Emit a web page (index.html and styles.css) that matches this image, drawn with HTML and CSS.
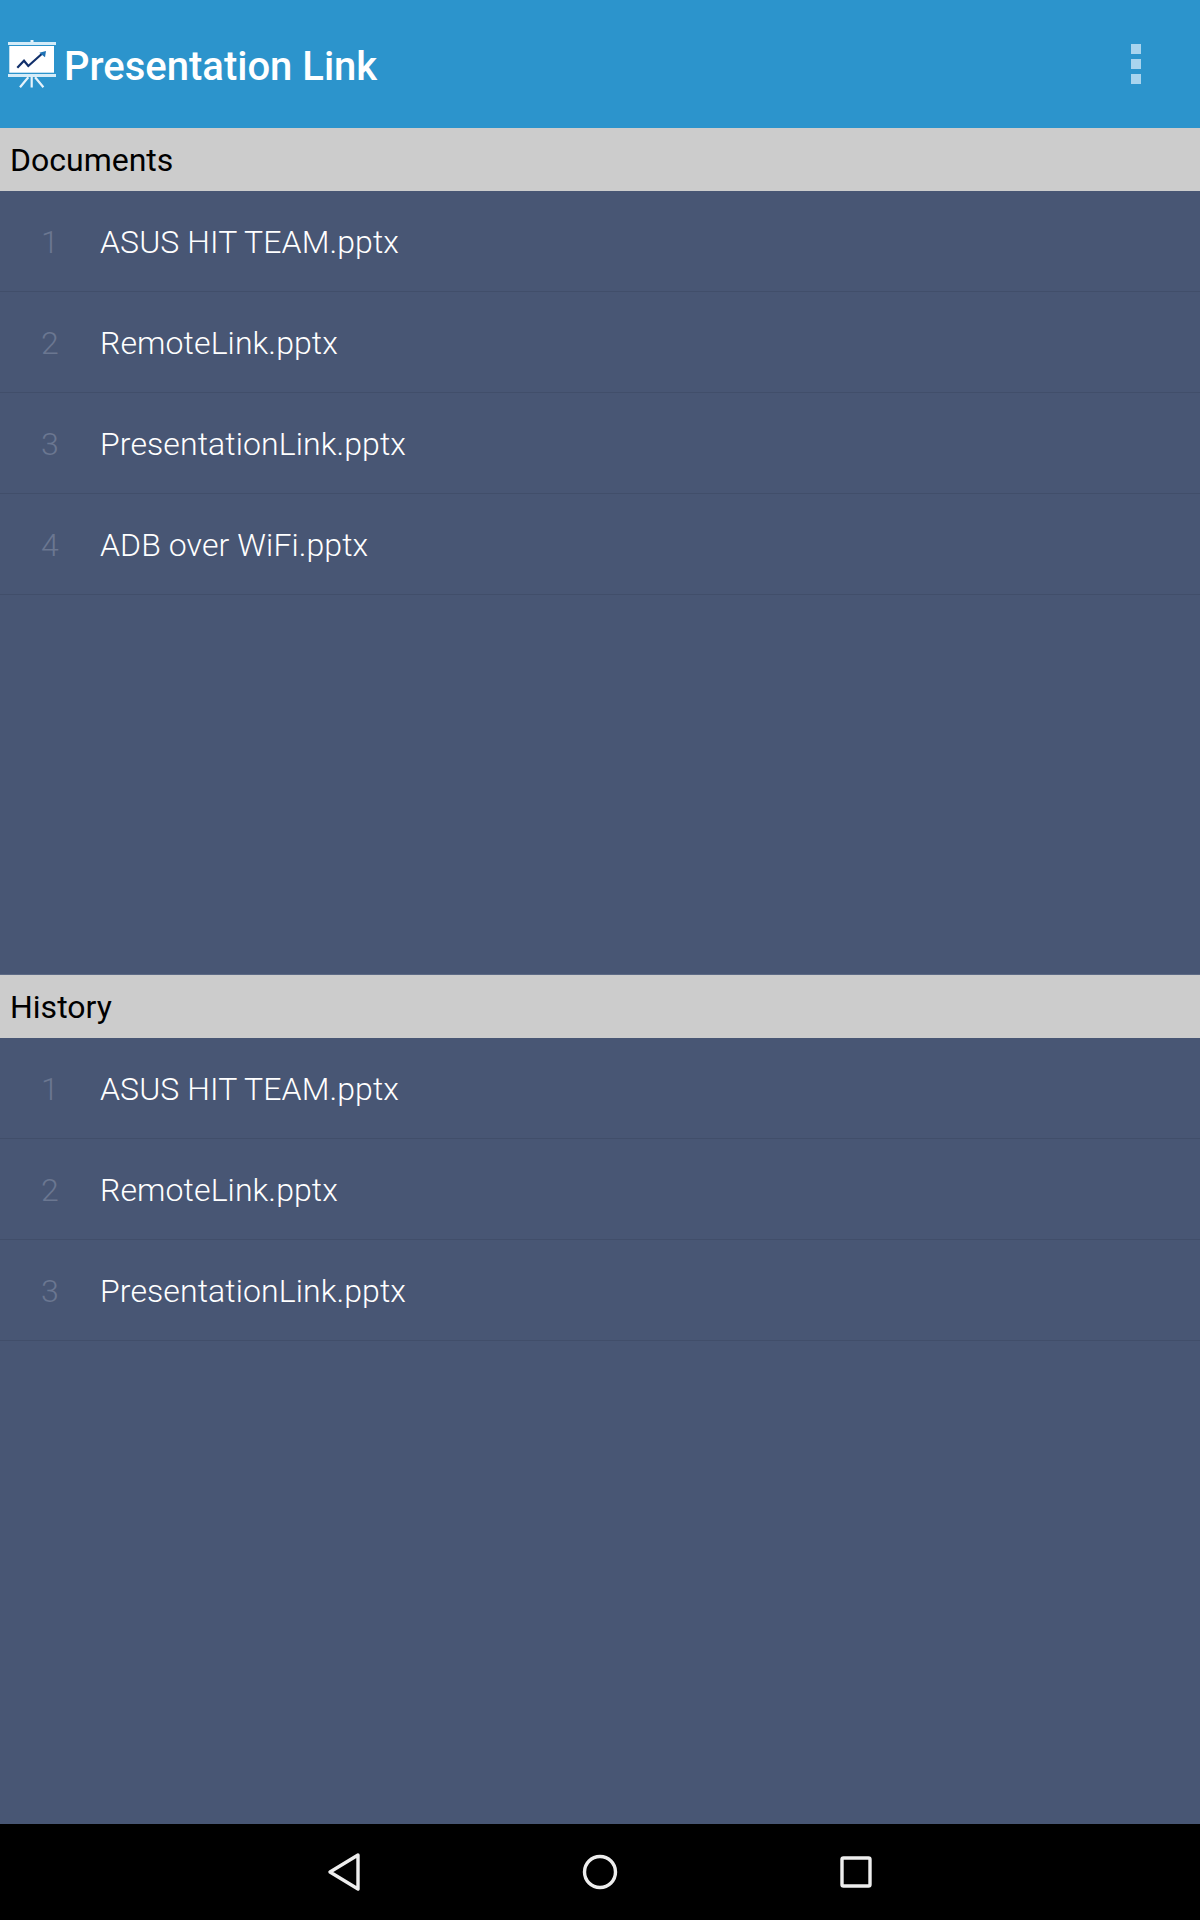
FILE: index.html
```html
<!DOCTYPE html>
<html lang="en">
<head>
<meta charset="utf-8">
<title>Presentation Link</title>
<link rel="stylesheet" href="styles.css">
</head>
<body>
<div class="app">
  <header class="appbar">
    <svg class="logo" width="48" height="48" viewBox="0 0 48 48" aria-hidden="true">
      <rect x="22.500" y="0" width="3" height="2" fill="#e6f3fb"/>
      <rect x="0" y="2" width="48" height="3" fill="#d5ecf8"/>
      <rect x="1.300" y="6" width="44.700" height="26.700" fill="#fff"/>
      <rect x="0" y="34" width="48" height="3" fill="#d5ecf8"/>
      <path d="M9.300 27.700 L16 20.700 L20.300 26 L33.700 14" fill="none" stroke="#12306b" stroke-width="2.200"/>
      <path d="M31.300 12.700 L38 11 L37 17.300 Z" fill="#1f73b5"/>
      <path d="M23.700 37 V47.500 M20.300 37.300 L12 47.300 M27.100 37.300 L35.400 47.300" fill="none" stroke="#e6f3fb" stroke-width="2.200"/>
    </svg>
    <h1 class="title">Presentation Link</h1>
    <div class="overflow" aria-label="More options">
      <span class="dot"></span><span class="dot"></span><span class="dot"></span>
    </div>
  </header>
  <main class="content">
    <section class="panel">
      <h2 class="panel-title">Documents</h2>
      <ul class="list">
        <li class="row"><span class="num">1</span><span class="name">ASUS HIT TEAM.pptx</span></li>
        <li class="row"><span class="num">2</span><span class="name">RemoteLink.pptx</span></li>
        <li class="row"><span class="num">3</span><span class="name">PresentationLink.pptx</span></li>
        <li class="row"><span class="num">4</span><span class="name">ADB over WiFi.pptx</span></li>
      </ul>
    </section>
    <section class="panel">
      <h2 class="panel-title">History</h2>
      <ul class="list">
        <li class="row"><span class="num">1</span><span class="name">ASUS HIT TEAM.pptx</span></li>
        <li class="row"><span class="num">2</span><span class="name">RemoteLink.pptx</span></li>
        <li class="row"><span class="num">3</span><span class="name">PresentationLink.pptx</span></li>
      </ul>
    </section>
  </main>
  <nav class="navbar">
    <svg class="nav-icon" width="40" height="40" viewBox="0 0 40 40" aria-hidden="true"><path d="M34 3 L6 20 L34 37 Z" fill="none" stroke="#eee" stroke-width="3.400" stroke-linejoin="round"/></svg>
    <svg class="nav-icon" width="40" height="40" viewBox="0 0 40 40" aria-hidden="true"><circle cx="20" cy="20" r="15.500" fill="none" stroke="#eee" stroke-width="3.400"/></svg>
    <svg class="nav-icon" width="40" height="40" viewBox="0 0 40 40" aria-hidden="true"><rect x="6" y="6" width="28" height="28" rx="1.500" fill="none" stroke="#eee" stroke-width="3.400"/></svg>
  </nav>
</div>
</body>
</html>
```
FILE: styles.css
```css
* { box-sizing: border-box; }
html, body { margin: 0; padding: 0; }
body { font-family: Roboto, "Liberation Sans", sans-serif; background: #485674; }
.app { width: 1200px; height: 1920px; display: flex; flex-direction: column; overflow: hidden; }
.appbar { height: 128px; flex: none; background: #2c94cc; display: flex; align-items: flex-start; padding: 40px 0 0 8px; }
.logo { flex: none; }
.title { margin: 3px 0 0 8px; font-size: 40px; line-height: 48px; font-weight: 500; color: #fff; flex: 1; }
.overflow { width: 10px; margin: 4px 59px 0 0; display: flex; flex-direction: column; gap: 5px; }
.dot { width: 10px; height: 10px; background: #a9d4ee; }
.content { flex: 1; display: flex; flex-direction: column; }
.panel { height: 846px; flex: none; }
.panel + .panel { height: 850px; border-top: 1px solid #5d6a85; }
.panel-title { margin: 0; height: 63px; background: #cccccc; color: #000; font-size: 32px; font-weight: 400; line-height: 61px; padding: 2px 0 0 10px; }
.list { margin: 0; padding: 0; list-style: none; }
.row { height: 101px; display: flex; align-items: center; padding-top: 1px; border-bottom: 1px solid #414e6a; }
.num { width: 100px; padding-left: 41px; font-size: 32px; font-weight: 300; color: #6b7791; flex: none; }
.name { font-size: 32px; font-weight: 300; color: #fff; letter-spacing: 0.1px; }
.navbar { height: 96px; flex: none; background: #000; display: flex; justify-content: center; align-items: center; gap: 216px; }
.nav-icon { flex: none; }
```
